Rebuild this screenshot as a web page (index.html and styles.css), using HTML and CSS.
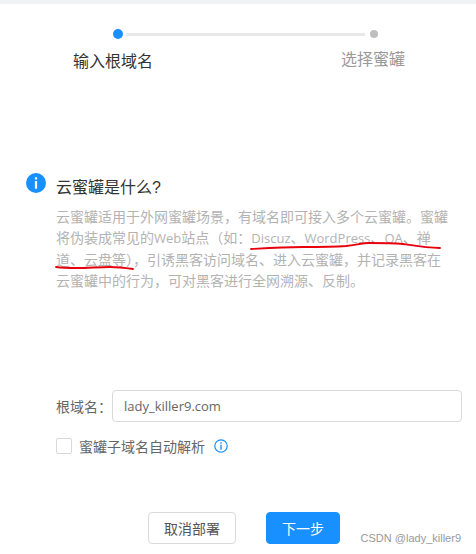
FILE: index.html
```html
<!DOCTYPE html>
<html lang="zh-CN">
<head>
    <meta charset="UTF-8">
    <title>云蜜罐</title>
    <link rel="stylesheet" href="styles.css">
</head>
<body>
    <div class="top-bar"></div>
    <div class="page">
        <div class="steps">
            <div class="step-track">
                <span class="dot dot-active"></span>
                <span class="track-line"></span>
                <span class="dot"></span>
            </div>
            <div class="step-labels">
                <span class="step-label step-label-active">输入根域名</span>
                <span class="step-label">选择蜜罐</span>
            </div>
        </div>

        <div class="intro">
            <svg class="info-solid" viewBox="0 0 20 20">
                <circle cx="10" cy="10" r="10" fill="#1890ff"/>
                <rect x="8.9" y="4.2" width="2.2" height="2.4" rx="0.6" fill="#fff"/>
                <rect x="8.9" y="8" width="2.2" height="7.8" rx="0.5" fill="#fff"/>
            </svg>
            <div class="intro-body">
                <h2 class="intro-title">云蜜罐是什么?</h2>
                <p class="intro-text">云蜜罐适用于外网蜜罐场景，有域名即可接入多个云蜜罐。蜜罐<br>将伪装成常见的<span class="latin">Web</span>站点（如：<span class="latin">Discuz</span>、<span class="latin">WordPress</span>、<span class="latin">OA</span>、禅<br>道、云盘等），引诱黑客访问域名、进入云蜜罐，并记录黑客在<br>云蜜罐中的行为，可对黑客进行全网溯源、反制。</p>
            </div>
            <!-- red pen marks on top of the screenshot -->
            <svg class="scribble" viewBox="0 0 476 60">
                <path d="M251 36 C268 35 286 34 303 34 C318 34 332 34 346 33 C356 32 362 30 369 30 C380 30 392 30 403 31 C416 33 428 35 440 35" fill="none" stroke="#e8000b" stroke-width="1.8" stroke-linecap="round"/>
                <path d="M56 54 C63 55 70 55 77 55 C88 55 99 54 110 54 C118 54 126 55 133 56" fill="none" stroke="#e8000b" stroke-width="1.8" stroke-linecap="round"/>
            </svg>
        </div>

        <div class="form">
            <div class="form-row">
                <label class="form-label">根域名：</label>
                <input class="form-input" type="text" value="lady_killer9.com">
            </div>
            <div class="check-row">
                <span class="checkbox"></span>
                <span class="check-text">蜜罐子域名自动解析</span>
                <svg class="info-line" viewBox="0 0 14 14">
                    <circle cx="7" cy="7" r="6.2" fill="none" stroke="#1890ff" stroke-width="1.2"/>
                    <rect x="6.3" y="3.2" width="1.4" height="1.5" fill="#1890ff"/>
                    <rect x="6.3" y="5.7" width="1.4" height="5" fill="#1890ff"/>
                </svg>
            </div>
        </div>

        <div class="actions">
            <button class="btn">取消部署</button>
            <button class="btn btn-primary">下一步</button>
        </div>
    </div>
    <div class="watermark">CSDN @lady_killer9</div>
</body>
</html>
```

FILE: styles.css
```css
* {
    box-sizing: border-box;
}
html, body {
    margin: 0;
    height: 100%;
}
body {
    position: relative;
    overflow: hidden;
    background: #fff;
    font-family: "Liberation Sans", "Noto Sans CJK SC", sans-serif;
    color: #333;
}
.top-bar {
    height: 4px;
    background: #f0f2f5;
}
.page {
    padding: 25px 14px 0 26px;
}
.steps {
    height: 144px;
}
.step-track {
    display: flex;
    align-items: center;
    height: 10px;
    margin-left: 87px;
    width: 265px;
}
.dot {
    width: 8px;
    height: 8px;
    border-radius: 50%;
    background: #bfbfbf;
}
.dot-active {
    width: 10px;
    height: 10px;
    background: #1890ff;
}
.track-line {
    flex: 1;
    height: 3px;
    margin: 0 5px 0 3px;
    background: #e8e8e8;
}
.step-labels {
    display: flex;
    align-items: flex-start;
    margin: 10px 0 0 47px;
    width: 332px;
    justify-content: space-between;
}
.step-label {
    font-size: 16px;
    line-height: 22px;
    color: #999;
}
.step-label-active {
    margin-top: 2px;
    color: #333;
}
.intro {
    position: relative;
    display: flex;
    gap: 10px;
}
.info-solid {
    flex: none;
    width: 20px;
    height: 20px;
}
.intro-title {
    margin: 3px 0 0;
    font-size: 16px;
    font-weight: normal;
    line-height: 24px;
    color: #333;
}
.intro-text {
    margin: 7px 0 0;
    font-size: 14px;
    line-height: 21.4px;
    color: #b3b3b3;
    width: 396px;
}
.latin {
    font-family: "Open Sans", "Liberation Sans", sans-serif;
    font-size: 13px;
}
.scribble {
    position: absolute;
    left: -26px;
    top: 40px;
    width: 476px;
    height: 60px;
}
.form {
    margin-top: 97px;
    padding-left: 30px;
}
.form-row {
    display: flex;
    align-items: center;
}
.form-label {
    width: 56px;
    font-size: 14px;
    color: #666;
}
.form-input {
    flex: 1;
    height: 32px;
    padding: 0 11px;
    border: 1px solid #d9d9d9;
    border-radius: 4px;
    font: 13px "Open Sans", "Liberation Sans", sans-serif;
    color: #666;
    outline: none;
}
.check-row {
    display: flex;
    align-items: center;
    margin-top: 14px;
}
.checkbox {
    width: 16px;
    height: 16px;
    border: 1px solid #d9d9d9;
    border-radius: 2px;
}
.check-text {
    margin-left: 7px;
    font-size: 14px;
    color: #666;
}
.info-line {
    width: 14px;
    height: 14px;
    margin-left: 9px;
}
.actions {
    display: flex;
    gap: 30px;
    margin-top: 56px;
    margin-left: 122px;
}
.btn {
    width: 88px;
    height: 32px;
    border: 1px solid #d9d9d9;
    border-radius: 4px;
    background: #fff;
    font: 14px "Liberation Sans", "Noto Sans CJK SC", sans-serif;
    color: #555;
}
.btn-primary {
    width: 74px;
    border-color: #1890ff;
    background: #1890ff;
    color: #fff;
}
.watermark {
    position: absolute;
    right: 15px;
    bottom: 9px;
    font-size: 11px;
    line-height: 14px;
    color: #999;
}
```
